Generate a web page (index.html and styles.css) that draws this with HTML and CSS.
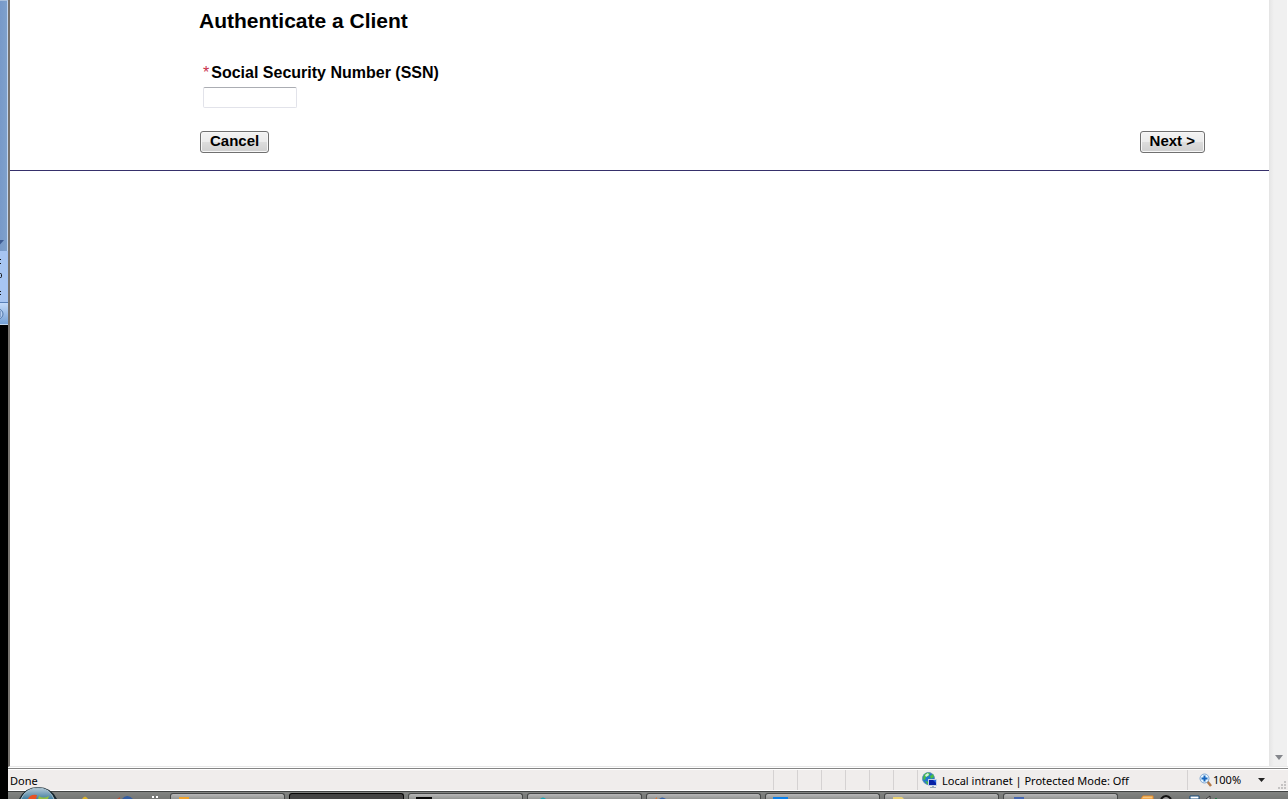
FILE: index.html
```html
<!DOCTYPE html>
<html lang="en">
<head>
<meta charset="utf-8">
<title>Authenticate a Client</title>
<link rel="stylesheet" href="styles.css">
</head>
<body>
<div class="desktop">
  <aside class="behind" aria-hidden="true">
    <div class="behind-scroll"><svg width="7" height="12" viewBox="0 0 7 12"><path d="M0 1H4L0 5.500Z" fill="#3d5a91"/></svg></div>
    <div class="behind-panel"><svg width="8" height="51" viewBox="0 0 8 51"><path d="M0 8h1v1H0zM0 12h1v1H0zM0 40h1v1H0zM0 43h1v1H0z" fill="#111"/><path d="M0 22.500h.5q1 0 1 1v2q0 1-1 1H0" fill="none" stroke="#111"/></svg></div>
    <div class="behind-button"><svg width="8" height="21" viewBox="0 0 8 21"><circle cx="-2" cy="11" r="5" fill="#b9d1f2" stroke="#5277a9"/><path d="M0 8v6" stroke="#5277a9"/></svg></div>
  </aside>
  <div class="window">
    <div class="viewport">
      <main class="page">
        <form class="form">
          <h1 class="title">Authenticate a Client</h1>
          <div class="field">
            <label class="label" for="ssn"><span class="required">*</span>Social Security Number (SSN)</label>
            <input class="input" id="ssn" type="text">
          </div>
          <div class="actions">
            <button class="button" type="button">Cancel</button>
            <button class="button" type="button">Next &gt;</button>
          </div>
        </form>
      </main>
      <div class="scrollbar"><svg width="8" height="5" viewBox="0 0 8 5"><path d="M0 0H8L4 5Z" fill="#85878c"/></svg></div>
    </div>
    <footer class="status">
      <span class="status-text">Done</span>
      <span class="pane"></span><span class="pane"></span><span class="pane"></span><span class="pane"></span><span class="pane"></span><span class="pane"></span>
      <span class="pane zone">
        <svg width="16" height="16" viewBox="0 0 16 16"><circle cx="6.500" cy="6.500" r="6" fill="#2378cf" stroke="#6593b4"/><path d="M2 3Q4 0 8 1L7 4 4 5 3 8 1 7ZM8 4l3-2 1 3-3 2zM3 9l4 1-1 3z" fill="#48bd45"/><path d="M3 3l3-2 1 2-3 2z" fill="#d4f4df"/><path d="M6 7h9v7H6z" fill="#c3d0e5"/><path d="M7 8h7v5H7z" fill="#0720a5"/><path d="M11 8h3v3z" fill="#2765e1"/><path d="M10 14h2v1h2v1H8v-1h2z" fill="#9babb9"/></svg>
        <span class="pane-text">Local intranet | Protected Mode: Off</span>
      </span>
      <span class="pane zoom">
        <svg width="13" height="14" viewBox="0 0 13 14"><path d="M8 8l4 5" stroke="#b47a48" stroke-width="2.500"/><circle cx="5.500" cy="5.500" r="4.500" fill="#e5f4ff" stroke="#81a7d1"/><path d="M5.500 2.500v6M2.500 5.500h6" stroke="#1766be" stroke-width="2"/></svg>
        <span class="zoom-value">100%</span>
        <svg width="7" height="4" viewBox="0 0 7 4"><path d="M0 0H7L3.500 4Z" fill="#222"/></svg>
      </span>
      <svg class="grip" width="8" height="8" viewBox="0 0 8 8"><path d="M6 0h2v2H6zM3 3h2v2H3zM6 3h2v2H6zM0 6h2v2H0zM3 6h2v2H3zM6 6h2v2H6z" fill="#c5c3c3"/></svg>
    </footer>
    <nav class="taskbar" aria-label="Taskbar">
      <div class="launch">
        <svg class="orb" width="42" height="12" viewBox="0 0 42 12"><defs><linearGradient id="orb" x2="0" y2="1"><stop stop-color="#b5cad8"/><stop offset="1" stop-color="#427d9f"/></linearGradient></defs><path d="M2 12Q8 0 21 0T40 12" fill="#15252e"/><path d="M4 12Q9 1 21 1T37 12" fill="url(#orb)" stroke="#a8c3d1"/><path d="M11 12Q13 7 20 8L19 12Z" fill="#e85123"/><path d="M22 9q4 3 10 0l-1 3H21Z" fill="#91bd43"/></svg>
        <svg class="quick" width="90" height="3" viewBox="0 0 90 3"><path d="M6 3q3-5 6 0z" fill="#d8b02b"/><path d="M41 3l3-2v2z" fill="#b44f35"/><path d="M46 3q5-6 11 0z" fill="#315ca2"/><path d="M76 0h2v2h-2zM80 0h2v2h-2z" fill="#fff"/></svg>
      </div>
      <button class="task" type="button" aria-label="Mail"><svg width="13" height="2"><path d="M1 0h10v2H1z" fill="#efa22b"/></svg></button>
      <button class="task task-active" type="button" aria-label="Browser"></button>
      <button class="task" type="button" aria-label="Console"><svg width="16" height="2"><path d="M0 0h16v2H0z" fill="#080808"/></svg></button>
      <button class="task" type="button" aria-label="Globe"><svg width="16" height="2"><path d="M5 2q3-3 6 0z" fill="#12a6b4"/></svg></button>
      <button class="task" type="button" aria-label="Firefox"><svg width="16" height="2"><path d="M1 2l2-2v2z" fill="#df7936"/><path d="M5 2q3-3 7 0z" fill="#3560a4"/></svg></button>
      <button class="task" type="button" aria-label="Document"><svg width="16" height="2"><path d="M0 0h15v2H0z" fill="#087fea"/></svg></button>
      <button class="task" type="button" aria-label="Folder"><svg width="16" height="2"><path d="M1 0h9l2 2H1z" fill="#e9d273"/></svg></button>
      <button class="task" type="button" aria-label="Word"><svg width="16" height="2"><path d="M3 0h10v2H3z" fill="#4466b1"/></svg></button>
      <div class="tray"><svg width="80" height="4" viewBox="0 0 80 4"><path d="M1 4l2-3h10v3z" fill="#f6c47b" stroke="#e68b27"/><path d="M21 4q5-6 10 0" fill="#999" stroke="#111" stroke-width="2"/><path d="M50 1h9v3h-9z" fill="#fff" stroke="#164b7a"/><path d="M66 4l4-3v3" fill="#bbb" stroke="#333"/><path d="M75 3h2v1h-2z" fill="#267446"/></svg></div>
    </nav>
  </div>
</div>
</body>
</html>
```
FILE: styles.css
```css
* { box-sizing: border-box; }
body { margin: 0; color: #000; font-family: "Liberation Sans", Arial, sans-serif; }
svg { display: block; flex: none; }
.desktop { display: flex; height: 100vh; overflow: hidden; background: #000; }
.behind { flex: 0 0 8px; }
.behind-scroll { display: flex; align-items: flex-end; height: 251px; border-top: 1px solid #aac0dc; border-right: 1px solid #c0d5f2; background: linear-gradient(90deg, #7799c9, #7fa1cc); }
.behind-panel { height: 51px; background: #a7c5f2; }
.behind-button { height: 23px; border-top: 1px solid #5980b8; border-bottom: 1px solid #c1d5ec; background: linear-gradient(#c4dbfa, #75a0d5); }
.window { display: flex; flex: 1; flex-direction: column; min-width: 0; background: #fff; }
.viewport { display: flex; flex: 1; min-height: 0; border-left: 2px solid #77736f; border-bottom: 1px solid #e8e8e8; }
.page { flex: 1; min-width: 0; }
.form { padding: 8px 64px 17px 189px; border-bottom: 1px solid #36306b; }
.title { margin: 0; font-size: 21px; line-height: 26px; }
.field { display: flex; flex-direction: column; align-items: flex-start; margin-top: 30px; padding-left: 4px; }
.label { font-size: 16px; font-weight: 700; line-height: 18px; }
.required { margin-right: 2px; color: #c8324b; font-weight: 400; }
.input { width: 94px; height: 21px; margin-top: 5px; padding: 2px; border: 1px solid #e2e3ea; border-top-color: #abadb3; border-radius: 2px; background: #fff; font: inherit; }
.actions { display: flex; justify-content: space-between; margin-top: 23px; padding-left: 1px; }
.button { height: 22px; padding: 0 9px 2px; border: 1px solid #707070; border-radius: 3px; background: linear-gradient(#f3f3f3 0%, #ebebeb 50%, #dddddd 51%, #cfcfcf 100%); box-shadow: inset 0 0 0 1px #f7f7f7; color: #000; font: 700 15px/18px "Liberation Sans", Arial, sans-serif; }
.scrollbar { display: flex; flex: 0 0 19px; align-items: flex-end; justify-content: center; padding-bottom: 6px; border-left: 1px solid #e5e5e5; border-right: 1px solid #fff; background: linear-gradient(90deg, #e7e7e7, #f0f0f0 4px); }
.status { display: flex; flex: 0 0 23px; margin-top: 1px; border-top: 1px solid #858585; border-bottom: 1px solid #fff; background: #f0edec; box-shadow: inset 0 1px #fff; font: 11px/16px "Noto Sans", "Open Sans", sans-serif; }
.status-text { flex: 1; padding: 4px 0 0 2px; }
.pane { flex: 0 0 24px; margin-top: 1px; border-left: 1px solid #d5d2d2; }
.zone { display: flex; flex-basis: 270px; align-items: center; gap: 4px; padding-left: 4px; white-space: nowrap; }
.pane-text { padding-top: 2px; }
.zoom { display: flex; flex-basis: 90px; align-items: center; padding: 0 12px 0 11px; }
.zoom-value { flex: 1; padding-left: 1px; }
.grip { align-self: flex-end; margin: 0 2px 1px 1px; }
.taskbar { display: flex; flex: 0 0 8px; gap: 4px; border-top: 1px solid #414343; background: linear-gradient(#828482, #747674); }
.launch { position: relative; flex: 0 0 158px; }
.orb { position: absolute; left: 9px; bottom: 0; }
.quick { position: absolute; left: 68px; bottom: 0; }
.task { flex: 0 1 115px; min-width: 0; height: 6px; margin-top: 1px; padding: 3px 7px 0; overflow: hidden; border: 1px solid #454747; border-bottom: 0; border-radius: 3px 3px 0 0; background: linear-gradient(#b8b8b8, #929492); }
.task-active { border-color: #080808; background: #434343; }
.tray { display: flex; flex: 1; align-items: flex-end; padding-left: 18px; }
```
